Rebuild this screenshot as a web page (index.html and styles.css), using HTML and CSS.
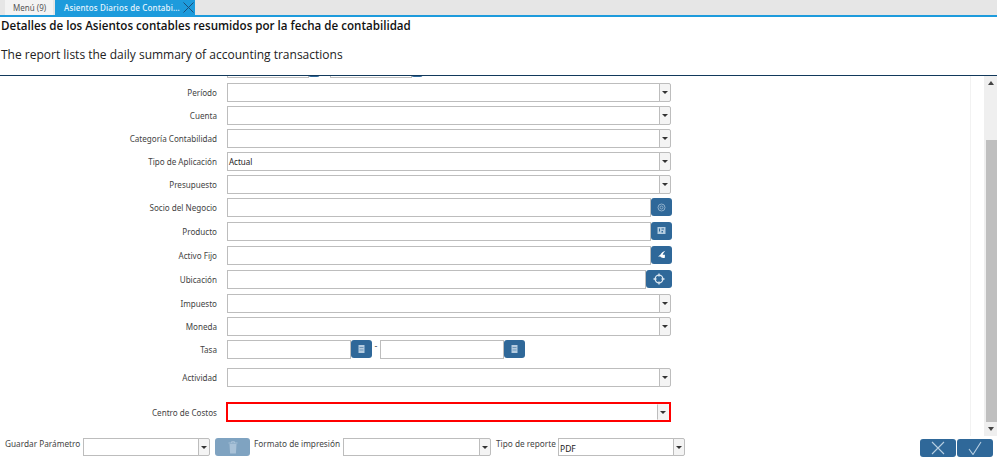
FILE: index.html
```html
<!DOCTYPE html>
<html lang="es">
<head>
<meta charset="utf-8">
<title>Asientos Diarios de Contabilidad</title>
<link rel="stylesheet" href="styles.css">
</head>
<body>
<svg class="defs" width="0" height="0" aria-hidden="true">
  <symbol id="cal" viewBox="0 0 7 8"><path d="M.5 0h6v8h-6z" fill="#b5cce0"/><path d="M1.500 2h4v1h-4zM1.500 4.500h4v1h-4z" fill="#6d97ba"/></symbol>
</svg>
<nav class="tabs">
  <div class="tab tab-menu">Menú (9)</div>
  <div class="tab tab-active"><span>Asientos Diarios de Contabi...</span>
    <svg class="tab-x" viewBox="0 0 11 11"><path d="M.5.500l10 10M10.500.500l-10 10" stroke="#1d4f78" fill="none"/></svg>
  </div>
</nav>
<header class="head">
  <h1>Detalles de los Asientos contables resumidos por la fecha de contabilidad</h1>
  <p>The report lists the daily summary of accounting transactions</p>
</header>
<main class="body">
  <div class="form">
    <div class="form-inner">
      <div class="row row-clip"><span class="input w-clip"></span><span class="btn btn-clip"></span><span class="input w-clip clip-2"></span><span class="btn btn-clip"></span></div>
      <div class="row"><label class="label">Período</label><div class="combo"><span class="input grow"></span><span class="arrow"><i></i></span></div></div>
      <div class="row"><label class="label">Cuenta</label><div class="combo"><span class="input grow"></span><span class="arrow"><i></i></span></div></div>
      <div class="row"><label class="label">Categoría Contabilidad</label><div class="combo"><span class="input grow"></span><span class="arrow"><i></i></span></div></div>
      <div class="row"><label class="label">Tipo de Aplicación</label><div class="combo"><span class="input grow val">Actual</span><span class="arrow"><i></i></span></div></div>
      <div class="row"><label class="label">Presupuesto</label><div class="combo"><span class="input grow"></span><span class="arrow"><i></i></span></div></div>
      <div class="row"><label class="label">Socio del Negocio</label><div class="combo"><span class="input w-search"></span><span class="btn btn-s">
        <svg viewBox="0 0 9 9" class="ico"><circle cx="4.500" cy="4.500" r="3.500" fill="none" stroke="#8fb0cc"/><circle cx="4.500" cy="4.500" r="1.500" fill="none" stroke="#8fb0cc"/></svg></span></div></div>
      <div class="row row-24"><label class="label">Producto</label><div class="combo"><span class="input w-search"></span><span class="btn btn-s">
        <svg viewBox="0 0 9 9" class="ico"><path d="M.500 1h8v7h-8z" fill="#b5cde0"/><path d="M2 2.500h1v3H2zM4.500 2.500h2.500v1H4.500zM4.500 5h1.500v1.500H4.500z" fill="#2f6899"/></svg></span></div></div>
      <div class="row row-24"><label class="label">Activo Fijo</label><div class="combo"><span class="input w-search"></span><span class="btn btn-s">
        <svg viewBox="0 0 9 9" class="ico ico-big"><path d="M7.500.6C5.500 1.200 3.900 2.600 3 4.200L.9 5.900h2.200c.7 1.400 2.200 1.500 4 1.100V4.200H5.100C5.500 2.900 6.400 1.600 7.500.6z" fill="#fff"/></svg></span></div></div>
      <div class="row row-24"><label class="label">Ubicación</label><div class="combo"><span class="input w-loc"></span><span class="btn btn-l">
        <svg viewBox="0 0 12 12" class="ico-l"><circle cx="6" cy="6" r="3.800" fill="none" stroke="#dce8f2" stroke-width="1.300"/><path d="M6 .5v3M6 8.500v3M.5 6h3M8.500 6h3" stroke="#dce8f2" stroke-width="1.300"/></svg></span></div></div>
      <div class="row row-24"><label class="label">Impuesto</label><div class="combo"><span class="input grow"></span><span class="arrow"><i></i></span></div></div>
      <div class="row"><label class="label">Moneda</label><div class="combo"><span class="input grow"></span><span class="arrow"><i></i></span></div></div>
      <div class="row"><label class="label">Tasa</label><div class="combo">
        <span class="input w-date"></span><span class="btn btn-s"><svg class="ico-cal"><use href="#cal"/></svg></span><span class="dash">-</span><span class="input w-date"></span><span class="btn btn-s"><svg class="ico-cal"><use href="#cal"/></svg></span></div></div>
      <div class="row row-act"><label class="label">Actividad</label><div class="combo"><span class="input grow"></span><span class="arrow"><i></i></span></div></div>
      <div class="row row-err"><label class="label">Centro de Costos</label><div class="combo combo-err"><span class="input grow"></span><span class="arrow"><i></i></span></div></div>
    </div>
  </div>
  <div class="scroll">
    <span class="sb-up"></span>
    <span class="sb-track"><span class="sb-thumb"></span></span>
    <span class="sb-down"></span>
  </div>
</main>
<footer class="foot">
  <span class="f-label f-first">Guardar Parámetro</span>
  <div class="combo f-combo f1"><span class="input grow"></span><span class="arrow"><i></i></span></div>
  <span class="trash"><svg viewBox="0 0 10 13" class="ico-trash"><path d="M.5 2h9M3.500 2V.7h3V2" stroke="#a9c2d8" fill="none"/><path d="M1.500 3h7l-.6 9.500H2.100z" fill="#a9c2d8"/></svg></span>
  <span class="f-label f-fmt">Formato de impresión</span>
  <div class="combo f-combo f2"><span class="input grow"></span><span class="arrow"><i></i></span></div>
  <span class="f-label f-type">Tipo de reporte</span>
  <div class="combo f-combo f3"><span class="input grow val pdf">PDF</span><span class="arrow"><i></i></span></div>
  <div class="actions">
    <span class="act"><svg viewBox="0 0 14 14" class="ico-act"><path d="M1 1l12 12M13 1L1 13" stroke="#b9d0e3" fill="none" stroke-width="1.100"/></svg></span>
    <span class="act"><svg viewBox="0 0 14 14" class="ico-act"><path d="M1 8l4 5.500L13 1" stroke="#b9d0e3" fill="none" stroke-width="1.100"/></svg></span>
  </div>
</footer>
</body>
</html>
```
FILE: styles.css
```css
* { box-sizing: border-box; }
html, body { margin: 0; padding: 0; }
body {
  width: 997px; height: 458px; overflow: hidden; background: #fff;
  font-family: "Open Sans", sans-serif; color: #333;
  display: flex; flex-direction: column;
}
.defs { position: absolute; }
.tabs {
  height: 17px; flex: none; background: #e6e6e6; border-bottom: 2px solid #1d9bdc;
  display: flex; padding-left: 5px; font-size: 8px; font-family: "Noto Sans", sans-serif;
}
.tab { height: 15px; line-height: 15px; }
.tab-menu { width: 48px; background: #f3f3f3; color: #555; padding-left: 8px; margin-right: 2px; }
.tab-active {
  width: 140px; background: #1d9bdc; color: #e8f5fc; padding-left: 9px;
  display: flex; align-items: center; font-weight: 500; white-space: nowrap; letter-spacing: .14px;
}
.tab-x { width: 11px; height: 11px; margin-left: 3px; flex: none; }
.head { height: 59px; flex: none; border-bottom: 1px solid #12395b; color: #111; padding-left: 1px; }
.head h1 { margin: 0; font-size: 11.600px; line-height: 17px; font-weight: 600; white-space: nowrap; }
.head p { margin: 12px 0 0; font-size: 12px; line-height: 17px; color: #222; white-space: nowrap; }
.body { height: 360px; flex: none; display: flex; justify-content: space-between; }
.form { width: 971px; height: 360px; overflow: hidden; border-right: 1px solid #f2f2f2; }
.form-inner { margin-top: -19px; }
.row { display: flex; align-items: center; height: 23px; }
.row-clip { height: 24px; padding-left: 227px; align-items: flex-start; padding-top: 2px; }
.row-24 { height: 24px; }
.row-act { height: 28px; margin-top: 2px; }
.row-err { height: 24px; margin-top: 9px; }
.label { width: 217px; text-align: right; font-size: 8.100px; color: #444; flex: none; margin-right: 10px; font-family: "Noto Sans", sans-serif; }
.combo { display: flex; align-items: stretch; height: 19px; width: 444px; }
.input {
  display: block; height: 100%; background: #fff; border: 1px solid #bdbdbd; font-size: 8px;
  color: #222; font-family: "Noto Sans", sans-serif;
}
.grow { flex: 1; min-width: 0; }
.val { line-height: 17px; padding-left: 1px; }
.arrow {
  width: 12px; flex: none; background: #f4f4f4; border: 1px solid #bdbdbd;
  border-radius: 0 2px 2px 0; display: flex; align-items: center; justify-content: center; margin-left: -1px;
}
.arrow i { width: 0; height: 0; border: 3px solid transparent; border-top: 3px solid #333; border-bottom: 0; }
.w-search { width: 424px; height: 19px; flex: none; }
.w-loc { width: 419px; height: 19px; flex: none; }
.w-date { width: 124px; flex: none; }
.w-clip { width: 82px; height: 19px; flex: none; }
.clip-2 { margin-left: 10px; }
.btn { background: #2f6899; border-radius: 3px; display: flex; align-items: center; justify-content: center; flex: none; height: 18px; }
.btn-s { width: 21px; }
.btn-l { width: 26px; }
.btn-clip { width: 12px; height: 18px; margin-left: -1px; }
.ico { width: 9px; height: 9px; }
.ico-big { width: 10px; height: 10px; }
.ico-l { width: 12px; height: 12px; }
.ico-cal { width: 7px; height: 8px; }
.dash { width: 8px; flex: none; font-size: 9px; text-align: center; line-height: 12px; }
.combo-err { width: 445px; height: 20px; margin-left: -1px; outline: 2px solid #f00; outline-offset: -2px; }
.combo-err .input { border-color: transparent; }
.combo-err .arrow { border-color: transparent; border-left-color: #bdbdbd; margin: 2px 2px 2px 0; height: 16px; }
.scroll { width: 13px; height: 360px; background: #efefef; display: flex; flex-direction: column; flex: none; }
.sb-up, .sb-down { height: 14px; flex: none; display: flex; justify-content: center; align-items: center; }
.sb-up::before { content: ""; border: 3.500px solid transparent; border-bottom: 4px solid #444; border-top: 0; }
.sb-down::before { content: ""; border: 3.500px solid transparent; border-top: 4px solid #444; border-bottom: 0; }
.sb-track { flex: 1; display: flex; flex-direction: column; justify-content: flex-end; padding-left: 2px; }
.sb-thumb { height: 282px; background: #bfbfbf; display: block; }
.foot { flex: 1; display: flex; align-items: flex-start; padding-top: 2px; }
.f-label { font-size: 8.250px; color: #444; line-height: 12px; font-family: "Noto Sans", sans-serif; white-space: nowrap; }
.f-first { margin-left: 5px; width: 78px; }
.f-combo { height: 18px; }
.f1 { width: 127px; }
.trash { width: 35px; height: 18px; background: #7fa3c1; border-radius: 3px; margin-left: 5px; display: flex; align-items: center; justify-content: center; }
.ico-trash { width: 10px; height: 13px; }
.f-fmt { margin-left: 4px; width: 89px; }
.f2 { width: 148px; }
.f-type { margin-left: 5px; width: 62px; }
.f3 { width: 127px; }
.pdf { padding-top: 1px; font-size: 8.500px; }
.actions { margin-left: auto; margin-right: 4px; display: flex; gap: 1px; margin-top: 1px; }
.act { width: 36px; height: 18px; background: #2f6899; border-radius: 3px; display: flex; align-items: center; justify-content: center; }
.ico-act { width: 14px; height: 14px; }
```
